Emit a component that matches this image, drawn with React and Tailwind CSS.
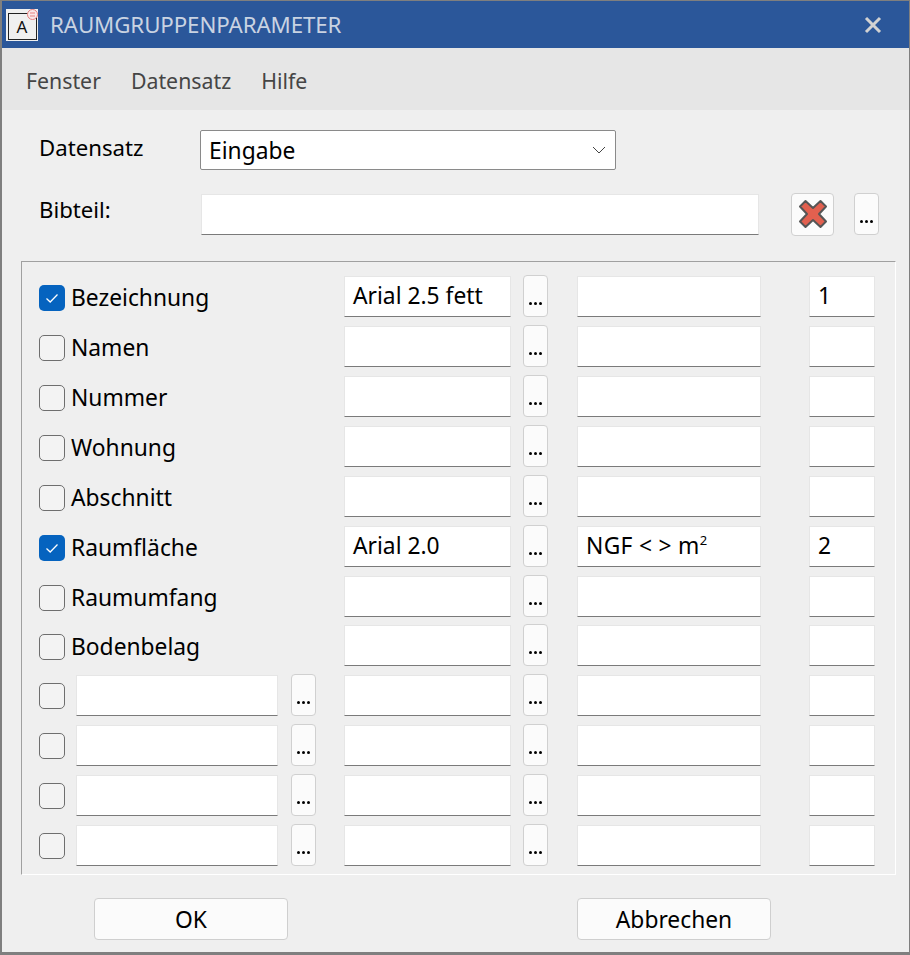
import React from 'react'

const font = { fontFamily: '"Noto Sans", sans-serif' }

const rows = [
  { label: 'Bezeichnung', checked: true, a: 'Arial 2.5 fett', c: '1' },
  { label: 'Namen' },
  { label: 'Nummer' },
  { label: 'Wohnung' },
  { label: 'Abschnitt' },
  { label: 'Raumfläche', checked: true, a: 'Arial 2.0', b: <span className="tracking-[0.3px]">NGF &lt; &gt; m<sup className="text-[13px] -top-[9px]">2</sup></span>, c: '2' },
  { label: 'Raumumfang', tight: true },
  { label: 'Bodenbelag' },
  {},
  {},
  {},
  {},
]

const Field = ({ className, children }) => (
  <div className={`h-[41px] bg-white border border-[#e6e6e6] border-b-[#7a7a7a] pl-2 flex items-center text-[22.8px] text-black whitespace-nowrap ${className}`}>
    {children}
  </div>
)

const Dots = ({ className }) => (
  <div className={`w-[25px] h-[42px] -mt-[1px] bg-[#fbfbfb] border border-[#d0d0d0] rounded-[4px] flex items-end justify-center pb-[11px] gap-[2px] ${className}`}>
    <span className="w-[3px] h-[3px] rounded-full bg-black" />
    <span className="w-[3px] h-[3px] rounded-full bg-black" />
    <span className="w-[3px] h-[3px] rounded-full bg-black" />
  </div>
)

const Check = ({ checked }) => (
  checked ? (
    <div className="w-[26px] h-[26px] rounded-[5px] bg-[#0563bf] flex items-center justify-center shrink-0">
      <svg width="16" height="16" viewBox="0 0 16 16" fill="none" stroke="white" strokeWidth="1.3"><path d="M2.5 8.5 L6.2 12 L13.5 4.5" /></svg>
    </div>
  ) : (
    <div className="w-[26px] h-[26px] rounded-[5px] border-[1.5px] border-[#6e6e6e] bg-[#f3f3f3] shrink-0" />
  )
)

const Row = ({ row }) => (
  <div className={`flex items-start ${row.tight ? 'h-[49px]' : 'h-[50px]'}`}>
    <div className="w-[321px] h-[41px] flex items-center shrink-0">
      <div className={`ml-[17px] ${row.label ? 'mt-[2px]' : ''}`}><Check checked={row.checked} /></div>
      {row.label ? (
        <span className="ml-[6px] mt-[3px] text-[22.8px] text-black">{row.label}</span>
      ) : (
        <>
          <Field className="ml-[11px] w-[202px]" />
          <Dots className="ml-[13px] self-start" />
        </>
      )}
    </div>
    <Field className="ml-[1px] w-[167px]">{row.a}</Field>
    <Dots className="ml-[12px]" />
    <Field className="ml-[29px] w-[184px]">{row.b}</Field>
    <Field className="ml-[48px] w-[66px]">{row.c}</Field>
  </div>
)

const App = () => {
  return (
    <div style={font} className="w-[910px] h-[955px] bg-[#efefef] border border-[#7f7f7f] border-b-[3px] border-l-[2px] flex flex-col overflow-hidden">
      <div className="h-[47px] bg-[#2b579a] flex items-center shrink-0 -ml-[1px]">
        <div className="relative ml-[5px] w-[32px] h-[32px] bg-[#f0f0f0] flex items-center justify-center">
          <div className="w-[29px] h-[27px] mt-[3px] border border-[#222] flex items-center justify-center text-[17px] leading-none text-[#111]">A</div>
          <svg className="absolute -top-[1px] -right-[1px]" width="13" height="13" viewBox="0 0 13 13" fill="none" stroke="#e88080"><circle cx="6.5" cy="6.5" r="5" fill="#f8e8e8" /><path d="M4 5h5M4 8h5" /></svg>
        </div>
        <span className="ml-[12px] text-[22.3px] text-[#c9d3e2] tracking-[-0.1px]">RAUMGRUPPENPARAMETER</span>
        <svg className="ml-auto mr-[27px]" width="18" height="18" viewBox="0 0 18 18" stroke="#d2d2d2" strokeWidth="3"><path d="M2 2 L16 16 M16 2 L2 16" /></svg>
      </div>
      <div className="h-[62px] bg-[#e6e6e6] flex items-center pl-[24px] pt-[3px] gap-[30px] text-[21.3px] text-[#454545] shrink-0">
        <span>Fenster</span>
        <span>Datensatz</span>
        <span>Hilfe</span>
      </div>
      <div className="flex items-center mt-[19px] h-[41px] shrink-0">
        <span className="ml-[37px] w-[161px] -mt-[3px] text-[22.2px] text-black">Datensatz</span>
        <div className="w-[416px] h-[40px] bg-white border border-[#8a8a8a] rounded-[2px] flex items-center justify-between pl-2 pr-[9px] text-[22.8px] text-black">
          <span className="pt-[3px]">Eingabe</span>
          <svg width="14" height="8" viewBox="0 0 14 8" fill="none" stroke="#444" strokeWidth="1"><path d="M1 1 L7 7 L13 1" /></svg>
        </div>
      </div>
      <div className="flex items-center mt-[23px] h-[42px] shrink-0">
        <span className="ml-[37px] w-[162px] -mt-[9px] text-[22.2px] text-black">Bibteil:</span>
        <Field className="w-[558px]" />
        <div className="ml-[32px] w-[43px] h-[43px] bg-[#fbfbfb] border border-[#d0d0d0] rounded-[4px] flex items-center justify-center">
          <svg width="30" height="30" viewBox="0 0 30 30"><path d="M7.5 2 L15 9 L22.5 2 L28 7.5 L21 15 L28 22.5 L22.5 28 L15 21 L7.5 28 L2 22.5 L9 15 L2 7.5 Z" fill="#e2604f" stroke="#555" strokeWidth="2" strokeLinejoin="round" /></svg>
        </div>
        <Dots className="ml-[20px]" />
      </div>
      <div className="ml-[19px] mt-[26px] w-[875px] h-[614px] border border-[#a0a0a0] border-r-white border-b-white pt-[14px] shrink-0">
        {rows.map((row, i) => <Row key={i} row={row} />)}
      </div>
      <div className="flex mt-[23px] shrink-0">
        <button className="ml-[92px] w-[194px] h-[42px] pt-[3px] bg-[#fbfbfb] border border-[#cfcfcf] rounded-[4px] text-[22.8px] text-black">OK</button>
        <button className="ml-[289px] w-[194px] h-[42px] pt-[3px] bg-[#fbfbfb] border border-[#cfcfcf] rounded-[4px] text-[22.8px] text-black">Abbrechen</button>
      </div>
    </div>
  )
}

export default App
